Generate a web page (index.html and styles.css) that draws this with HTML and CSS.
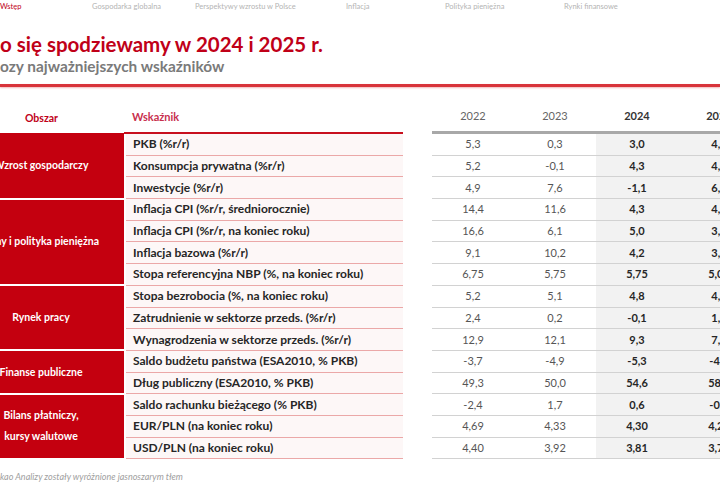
FILE: index.html
```html
<!DOCTYPE html>
<html lang="pl">
<head>
  <meta charset="UTF-8">
  <meta name="viewport" content="width=device-width, initial-scale=1.0">
  <title>Prognozy</title>
  <link rel="stylesheet" href="styles.css">
</head>
<body>
  <nav class="top-nav">
    <span class="nav-item active">Wstęp</span>
    <span class="nav-item">Gospodarka globalna</span>
    <span class="nav-item">Perspektywy wzrostu w Polsce</span>
    <span class="nav-item">Inflacja</span>
    <span class="nav-item">Polityka pieniężna</span>
    <span class="nav-item">Rynki finansowe</span>
  </nav>

  <header class="slide-head">
    <h1>o się spodziewamy w 2024 i 2025 r.</h1>
    <h2>ozy najważniejszych wskaźników</h2>
  </header>

  <table class="forecast">
    <colgroup>
      <col class="c-area">
      <col class="c-ind">
      <col class="c-gap">
      <col class="c-num">
      <col class="c-num">
      <col class="c-num">
      <col class="c-num">
    </colgroup>
    <thead>
      <tr>
        <th class="area">Obszar</th>
        <th class="ind">Wskaźnik</th>
        <th class="gap"></th>
        <th class="num">2022</th>
        <th class="num">2023</th>
        <th class="num fc">2024</th>
        <th class="num fc">2025</th>
      </tr>
    </thead>
    <tbody>
      <tr class="group">
        <td class="area" rowspan="3">Wzrost gospodarczy</td>
        <td class="ind">PKB (%r/r)</td><td class="gap"></td>
        <td class="num">5,3</td><td class="num">0,3</td><td class="num fc">3,0</td><td class="num fc">4,0</td>
      </tr>
      <tr>
        <td class="ind">Konsumpcja prywatna (%r/r)</td><td class="gap"></td>
        <td class="num">5,2</td><td class="num">-0,1</td><td class="num fc">4,3</td><td class="num fc">4,0</td>
      </tr>
      <tr>
        <td class="ind">Inwestycje (%r/r)</td><td class="gap"></td>
        <td class="num">4,9</td><td class="num">7,6</td><td class="num fc">-1,1</td><td class="num fc">6,0</td>
      </tr>

      <tr class="group">
        <td class="area" rowspan="4">Ceny i polityka pieniężna</td>
        <td class="ind">Inflacja CPI (%r/r, średniorocznie)</td><td class="gap"></td>
        <td class="num">14,4</td><td class="num">11,6</td><td class="num fc">4,3</td><td class="num fc">4,2</td>
      </tr>
      <tr>
        <td class="ind">Inflacja CPI (%r/r, na koniec roku)</td><td class="gap"></td>
        <td class="num">16,6</td><td class="num">6,1</td><td class="num fc">5,0</td><td class="num fc">3,5</td>
      </tr>
      <tr>
        <td class="ind">Inflacja bazowa (%r/r)</td><td class="gap"></td>
        <td class="num">9,1</td><td class="num">10,2</td><td class="num fc">4,2</td><td class="num fc">3,4</td>
      </tr>
      <tr>
        <td class="ind">Stopa referencyjna NBP (%, na koniec roku)</td><td class="gap"></td>
        <td class="num">6,75</td><td class="num">5,75</td><td class="num fc">5,75</td><td class="num fc">5,00</td>
      </tr>

      <tr class="group">
        <td class="area" rowspan="3">Rynek pracy</td>
        <td class="ind">Stopa bezrobocia (%, na koniec roku)</td><td class="gap"></td>
        <td class="num">5,2</td><td class="num">5,1</td><td class="num fc">4,8</td><td class="num fc">4,7</td>
      </tr>
      <tr>
        <td class="ind">Zatrudnienie w sektorze przeds. (%r/r)</td><td class="gap"></td>
        <td class="num">2,4</td><td class="num">0,2</td><td class="num fc">-0,1</td><td class="num fc">1,0</td>
      </tr>
      <tr>
        <td class="ind">Wynagrodzenia w sektorze przeds. (%r/r)</td><td class="gap"></td>
        <td class="num">12,9</td><td class="num">12,1</td><td class="num fc">9,3</td><td class="num fc">7,1</td>
      </tr>

      <tr class="group">
        <td class="area" rowspan="2">Finanse publiczne</td>
        <td class="ind">Saldo budżetu państwa (ESA2010, % PKB)</td><td class="gap"></td>
        <td class="num">-3,7</td><td class="num">-4,9</td><td class="num fc">-5,3</td><td class="num fc">-4,4</td>
      </tr>
      <tr>
        <td class="ind">Dług publiczny (ESA2010, % PKB)</td><td class="gap"></td>
        <td class="num">49,3</td><td class="num">50,0</td><td class="num fc">54,6</td><td class="num fc">58,1</td>
      </tr>

      <tr class="group">
        <td class="area" rowspan="3">Bilans płatniczy,<br>kursy walutowe</td>
        <td class="ind">Saldo rachunku bieżącego (% PKB)</td><td class="gap"></td>
        <td class="num">-2,4</td><td class="num">1,7</td><td class="num fc">0,6</td><td class="num fc">-0,3</td>
      </tr>
      <tr>
        <td class="ind">EUR/PLN (na koniec roku)</td><td class="gap"></td>
        <td class="num">4,69</td><td class="num">4,33</td><td class="num fc">4,30</td><td class="num fc">4,25</td>
      </tr>
      <tr>
        <td class="ind">USD/PLN (na koniec roku)</td><td class="gap"></td>
        <td class="num">4,40</td><td class="num">3,92</td><td class="num fc">3,81</td><td class="num fc">3,70</td>
      </tr>
    </tbody>
  </table>

  <p class="footnote">kao Analizy zostały wyróżnione jasnoszarym tłem</p>
</body>
</html>
```

FILE: styles.css
```css
body {
  margin: 0;
  font-family: Lato, "Open Sans", Arial, sans-serif;
  background-color: #fff;
  color: #333;
  overflow: hidden;
  width: 720px;
  height: 500px;
}
.top-nav {
  display: grid;
  grid-template-columns: 92px 103px 151px 99px 119px 1fr;
  padding-top: 3px;
  height: 11px;
  font-size: 7.5px;
  line-height: 8px;
  color: #b4b4b4;
  white-space: nowrap;
}
.nav-item.active {
  color: #c00018;
}
.slide-head {
  padding-top: 17px;
}
.slide-head h1 {
  margin: 0;
  font-size: 20.5px;
  line-height: 26px;
  font-weight: bold;
  color: #c00018;
  white-space: nowrap;
}
.slide-head h2 {
  margin: 0;
  font-size: 15.4px;
  line-height: 19px;
  font-weight: bold;
  color: #7a7a7a;
  white-space: nowrap;
}
.slide-head::after {
  content: "";
  display: block;
  margin-top: 8px;
  height: 3px;
  background-color: #d8333a;
  box-shadow: 0 1px 2px rgba(216, 51, 58, 0.35);
}
.forecast {
  margin-left: -42px;
  width: 802px;
  table-layout: fixed;
  border-collapse: collapse;
  font-size: 11px;
}
.c-area { width: 167px; }
.c-ind { width: 278px; }
.c-gap { width: 29px; }
.c-num { width: 82px; }
.forecast th {
  height: 36px;
  padding: 0 0 8px;
  vertical-align: bottom;
  font-weight: normal;
  line-height: 14px;
}
.forecast th.area {
  color: #c00018;
  font-weight: bold;
  font-size: 10.5px;
}
.forecast th.ind {
  text-align: left;
  padding-left: 7px;
  color: #c8304e;
  font-weight: bold;
  border-bottom: 2px solid #c8101e;
}
.forecast th.num {
  color: #666;
  border-bottom: 3px solid #a8a8a8;
}
.forecast th.fc {
  color: #333;
  font-weight: bold;
}
.forecast td {
  height: 20.7px;
  padding: 0;
  line-height: 14px;
}
.forecast td.area {
  background-color: #c4000f;
  color: #fff;
  font-weight: bold;
  font-size: 10.5px;
  text-align: center;
  border-right: 2px solid #fff;
  border-bottom: 2px solid #fff;
  line-height: 21px;
}
.forecast td.ind {
  background-color: #fdf7f7;
  padding-left: 7px;
  font-size: 12px;
  font-weight: bold;
  color: #262626;
  border-bottom: 1px solid #eba8a8;
  white-space: nowrap;
}
.forecast td.num {
  text-align: center;
  color: #555;
  border-bottom: 1px solid #d2d2d2;
}
.forecast td.fc {
  background-color: #f2f2f2;
  color: #262626;
  font-weight: bold;
}
.footnote {
  margin: 11px 0 0;
  font-size: 9px;
  font-style: italic;
  color: #a0a0a0;
}
```
